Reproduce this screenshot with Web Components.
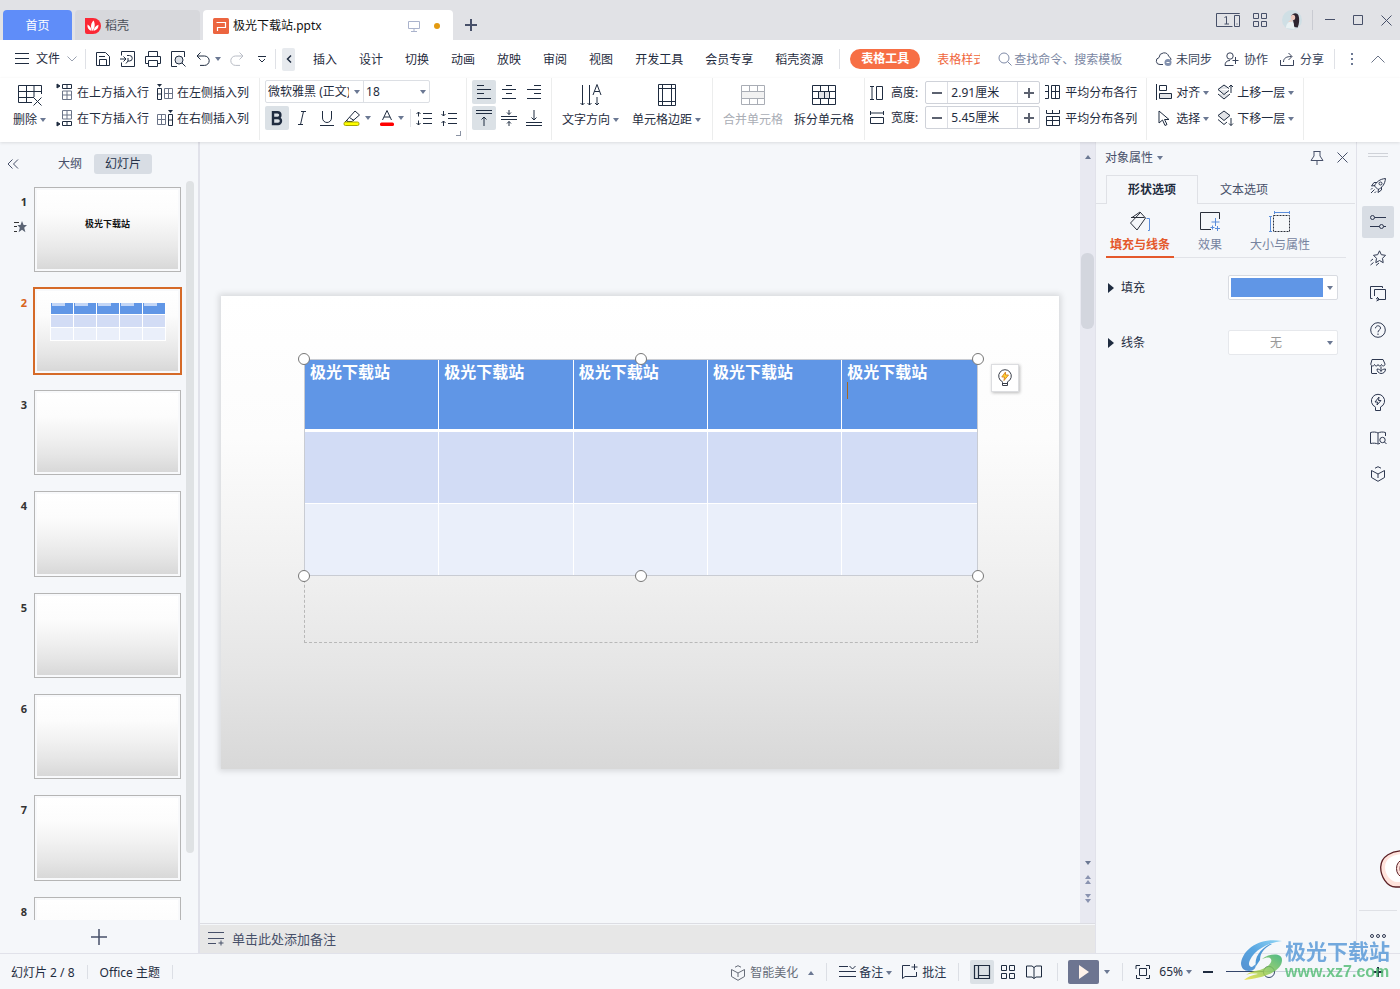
<!DOCTYPE html>
<html lang="zh-CN">
<head>
<meta charset="utf-8">
<title>极光下载站.pptx</title>
<style>
html,body{margin:0;height:100%}
body{font:12px/16px "Noto Sans","Noto Sans CJK SC",sans-serif;color:#1f2c40;background:#f5f7fa;overflow:hidden}
</style>
</head>
<body>
<office-app></office-app>
<script>
const RESET = `
*{box-sizing:border-box}
button,input,select{font:inherit;color:inherit;background:none;border:0;margin:0;padding:0;outline:0;border-radius:0}
button{display:flex;align-items:center;justify-content:center;white-space:nowrap;cursor:pointer}
select{appearance:none}
a{color:inherit;text-decoration:none}
h2,p{margin:0;font:inherit}`;

function define(name, css, html, setup) {
  const tpl = document.createElement('template');
  tpl.innerHTML = `<style>${RESET}${css}</style>${html}`;
  customElements.define(name, class extends HTMLElement {
    constructor() {
      super();
      this.attachShadow({mode: 'open'}).append(tpl.content.cloneNode(true));
    }
    connectedCallback() { if (setup) setup(this, this.shadowRoot); }
  });
}

/* name: [width, height, markup] */
const ICONS = {
  caret: [6,4,'<path d="M0 0h6L3 4z" fill="#6b7893" stroke="none"/>'],
  caretUp: [6,4,'<path d="M0 4h6L3 0z" fill="#6b7893" stroke="none"/>'],
  dblUp: [6,9,'<path d="M0 4h6L3 0zM0 9h6L3 5z" fill="#8a93b0" stroke="none"/>'],
  dblDown: [6,9,'<path d="M0 0h6L3 4zM0 5h6L3 9z" fill="#8a93b0" stroke="none"/>'],
  tri: [6,10,'<path d="M0 0l6 5-6 5z" fill="currentColor" stroke="none"/>'],
  chev: [10,6,'<path d="M.5.5L5 5l4.500-4.500"/>'],
  chevUp: [14,8,'<path d="M.5 7.500L7 1l6.500 6.500"/>'],
  chevL: [6,8,'<path d="M5 .5L1.500 4 5 7.500" stroke-width="1.500"/>'],
  dblL: [12,10,'<path d="M5.500.5L1 5l4.500 4.500M11 .5L6.500 5l4.500 4.500"/>'],
  plus: [14,14,'<path d="M7 1v12M1 7h12" stroke-width="2"/>'],
  plusBig: [16,16,'<path d="M8 0v16M0 8h16" stroke-width="1.500"/>'],
  plusS: [10,10,'<path d="M5 0v10M0 5h10" stroke-width="2"/>'],
  minusS: [10,10,'<path d="M0 5h10" stroke-width="2"/>'],
  menu: [14,12,'<path d="M0 .5h14M0 5.500h14M0 10.500h14"/>'],
  dots: [2,14,'<path d="M0 1h2v2H0zM0 6h2v2H0zM0 11h2v2H0z" fill="#6b7893" stroke="none"/>'],
  daoke: [16,16,'<path d="M0 0h8a8 8 0 010 16H2a2 2 0 01-2-2z" fill="#fb2835" stroke="none"/><path d="M7.500 13C5 9 6 5 8.500 2.500 10.500 6 10 10 7.500 13zM6.500 13C3.500 12 2 9.500 2.500 6.500 5 8 6.500 10 6.500 13zM8.500 13c.3-3 2-5 5-6.200.2 3.200-1.500 5.400-5 6.200z" fill="#fff" stroke="none"/>'],
  ppt: [16,16,'<rect width="16" height="16" rx="1.500" fill="#ec6540" stroke="none"/><path d="M3.500 4.500h9v5h-8v3.500" stroke="#fff" stroke-width="1.200"/>'],
  monitor: [12,12,'<path d="M.5 1.500h11v7H.5zM6 8.500v2.500M3 11.500h6"/>'],
  dot: [6,6,'<circle cx="3" cy="3" r="3" fill="#e39a10" stroke="none"/>'],
  winSwitch: [24,14,'<path d="M23.500 1V.5H.5v13h16M18.500 13.500v-11h5v11z"/><path d="M8.500 4.500l2-1v7.500M8.500 11h4.500M20.500 11h1"/>'],
  apps: [14,14,'<path d="M.5.5h5v5h-5zM8.500.5h5v5h-5zM.5 8.500h5v5h-5zM8.500 8.500h5v5h-5z"/>'],
  avatar: [20,20,'<circle cx="10" cy="10" r="10" fill="#cfdfe5" stroke="none"/><path d="M9 7c1-4 6-5 7.500-1.500 1 3 1 8-.8 12l-3.500-.5-1-6z" fill="#2d2530" stroke="none"/><ellipse cx="11" cy="7.500" rx="2.200" ry="2.800" fill="#ecc8bd" stroke="none"/><path d="M4 18c0-4 2.500-6.500 5.500-6.500 2 0 2.500 3 3 7.500z" fill="#e9f1f3" stroke="none"/><path d="M6 12l3-2.500 2 2" fill="#efcfc5" stroke="none"/>'],
  winMin: [10,10,'<path d="M0 4.500h10"/>'],
  winMax: [10,10,'<path d="M.5.5h9v9h-9z"/>'],
  close: [11,11,'<path d="M.5.5l10 10M10.500.5l-10 10"/>'],
  save: [16,16,'<path d="M1.500 1.500h9l4 4v9h-13zM4.500 14.500v-6h7v6M4 5.500h6"/>'],
  export: [16,16,'<path d="M1.500 4.500v-4h13v15h-13v-4M0 8h5.500M3.500 5.500L6 8l-2.500 2.500M7 4.500h2.500a2.500 2.500 0 010 5.500H8v-3M8 10l-2 2.500"/>'],
  print: [16,16,'<path d="M3.500 5.500v-5h9v5M3.500 12.500h-3v-7h15v7h-3M3.500 9.500h9v6h-9z"/>'],
  preview: [16,16,'<path d="M7 15.500H1.500V.5h13V6"/><circle cx="9" cy="9" r="4" fill="#dde1e7"/><path d="M12 12l3.500 3.500"/>'],
  undo: [14,14,'<path d="M4.500.5L1 4l3.500 3.500M1 4h7.500a4.700 4.700 0 010 9.400H4"/>'],
  redo: [14,14,'<path d="M9.500.5L13 4 9.500 7.500M13 4H5.500a4.700 4.700 0 000 9.400H10"/>'],
  more: [8,7,'<path d="M0 .5h8M1 3l3 3 3-3"/>'],
  search: [14,14,'<circle cx="6" cy="6" r="5"/><path d="M9.500 9.500L13.500 13.500"/>'],
  cloud: [16,14,'<path d="M7 12.500H4A3.500 3.500 0 013 5.600 5 5 0 0112.800 4.500 3.600 3.600 0 0115 8"/><circle cx="12" cy="10.500" r="3.500" fill="#8391ae" stroke="none"/><path d="M10.500 10.500h3" stroke="#fff"/>'],
  people: [15,14,'<circle cx="6" cy="4" r="3.200"/><path d="M9.500 13.500H1C1 10 3 8.500 6 8.500M11.500 5v7M8.500 8.500h6"/>'],
  share: [15,14,'<path d="M.5 8v5.500h13V8M3.500 10c0-4 3-5.500 8-5.500M8.500 1l3.500 3.500L8.500 8"/>'],
  del: [24,22,'<path d="M23.500 10V1.500h-23v17H14M.5 7.500h23M.5 13.500H16M8.500 1.500v17M16 1.500V13M15.500 13.500l8 8M23.500 13.500l-8 8"/>'],
  rowAbove: [16,16,'<path d="M0 0l3 2-3 2z" fill="currentColor"/><path d="M5.500.5h9v4h-9zM10 .5v4"/><path d="M5.500 7h9v8.500h-9zM10 7v8.500M5.500 11h9" stroke="#6b7488"/>'],
  rowBelow: [16,16,'<path d="M0 12l3 2-3 2z" fill="currentColor"/><path d="M5.500 11.500h9v4h-9zM10 11.500v4"/><path d="M5.500.5h9V9h-9zM10 .5V9M5.500 5h9" stroke="#6b7488"/>'],
  colLeft: [16,16,'<path d="M0 0h5L2.500 3z" fill="currentColor" stroke="none"/><path d="M.5 4.500h4v11h-4zM.5 10h4"/><path d="M7.500 4.500h8v10h-8zM11.500 4.500v10M7.500 9.500h8" stroke="#6b7488"/>'],
  colRight: [16,16,'<path d="M11 0h5l-2.500 3z" fill="currentColor" stroke="none"/><path d="M11.500 4.500h4v11h-4zM11.500 10h4"/><path d="M.5 4.500h8v10h-8zM4.500 4.500v10M.5 9.500h8" stroke="#6b7488"/>'],
  bold: [12,14,'<path d="M2 1.200h4.500a2.900 2.900 0 010 5.800H2zM2 7h5a3 3 0 010 6H2z" stroke-width="2.400"/>'],
  italic: [10,14,'<path d="M4 .5h5M1 13.500h5M6.500.5l-3 13"/>'],
  underline: [14,15,'<path d="M2.500 0v7a4.500 4.500 0 009 0V0M0 14.500h14"/>'],
  marker: [18,16,'<path d="M4 10l8-9 4.500 4L9 11.500H4zM6.500 7.500l4.500 3M4 10l-2 2"/><rect x="1" y="12" width="15" height="3.500" rx="1.500" fill="#ff0" stroke="#a8a400"/>'],
  fontColor: [14,16,'<path d="M2.500 10L7 .5 11.500 10M4 7h6"/><rect y="12.500" width="14" height="3.500" rx="1.500" fill="#f00" stroke="none"/>'],
  spaceOut: [16,15,'<path d="M7 2.500h9M7 7.500h9M7 12.500h9M2.500 1v4.500M.5 3l2-2 2 2M2.500 9.500V14M.5 12l2 2 2-2"/>'],
  spaceIn: [16,15,'<path d="M7 2.500h9M7 7.500h9M7 12.500h9M2.500 0v5M.5 3l2 2 2-2M2.500 15v-5M.5 12l2-2 2 2"/>'],
  alignL: [14,14,'<path d="M0 .5h7M0 4.500h14M0 8.500h7M0 13.500h14"/>'],
  alignC: [14,14,'<path d="M4 .5h6M0 4.500h14M4 8.500h6M0 13.500h14"/>'],
  alignR: [14,14,'<path d="M7 .5h7M0 4.500h14M7 8.500h7M0 13.500h14"/>'],
  vTop: [16,16,'<path d="M0 .5h16M0 3.500h16M8 16V7M5.500 9.500L8 7l2.500 2.500"/>'],
  vMid: [16,16,'<path d="M0 6.500h16M0 9.500h16M8 0v4.500M6 2.500l2 2 2-2M8 16v-4.500M6 13.500l2-2 2 2"/>'],
  vBot: [16,16,'<path d="M0 12.500h16M0 15.500h16M8 0v10M5.500 7.500L8 10l2.500-2.500"/>'],
  textDir: [22,22,'<path d="M2.500 1v20M.5 19l2 2 2-2M9.500 1v20M7.500 19l2 2 2-2M17 13v8M15 19l2 2 2-2M13 11L17 .5 21 11M14.500 7.500h5"/>'],
  cellMargin: [18,22,'<path d="M.5.5h17v21H.5zM4.500.5v21M13.500.5v21M.5 4.500h17M.5 17.500h17"/>'],
  merge: [24,20,'<path d="M.5.5h23v19H.5zM8.500.5v6M16.500.5v6M8.500 13.500v6M16.500 13.500v6"/><path d="M.5 6.500h23v7H.5z" fill="#f2f2f2"/>'],
  split: [24,20,'<path d="M.5.5h23v19H.5zM8.500.5v6M16.500.5v6M8.500 13.500v6M16.500 13.500v6"/><path d="M.5 6.500h23v7H.5z"/><path d="M6.500 6.500h11v7h-11zM12.500 6.500v7" fill="#e2e4e8"/>'],
  height: [14,14,'<path d="M0 .5h4M0 13.500h4M2 .5v13M6.500.5h6v13h-6z"/>'],
  width: [14,14,'<path d="M.5 0v4M13.500 0v4M.5 2h13M.5 6.500h13v6H.5z"/>'],
  distRow: [16,14,'<path d="M0 .5h3.500V13.500H0M0 6.500h3.500M6.500.5h8v13h-8zM6.500 6.500h8M10.500.5v13"/>'],
  distCol: [14,16,'<path d="M.5 0v3.500h13V0M6.500 0v3.500M.5 6.500h13v9H.5zM.5 10.500h13M6.500 6.500v9"/>'],
  align: [16,16,'<path d="M.5 0v16M3.500 1.500h7v5h-7z"/><path d="M3.500 9.500h12v5h-12z" fill="#e2e4e8"/>'],
  cursor: [14,16,'<path d="M2 1v12l3.500-3 2.500 5.500 2-1-2.500-5h4.500z"/>'],
  up: [16,16,'<path d="M1 10l6 5 6-5M1 5.500L7 1l5 3.500M1 5.500l6 5 5-4" fill="#e2e4e8"/><path d="M14 9V1M12 3l2-2 2 2"/>'],
  down: [16,16,'<path d="M1 5.500L7 1l6 4.500-6 5z" fill="#e2e4e8"/><path d="M1 9.500l6 5 3-2.500M14 8v7.500M12 13.500l2 2 2-2"/>'],
  star: [13,12,'<path d="M8 0l1.600 4H13l-2.800 2.800 1.200 4.400L8 8.800l-3.400 2.400 1.200-4.400L3.500 4h3z" fill="#5b6474" stroke="none"/><path d="M0 1.500h5M0 5.500h3M0 10.500h3"/>'],
  bulb: [14,18,'<path d="M4.500 13.500V12.800A6.300 6.300 0 119.500 12.800V16.500h-5zM4.500 14.500h5" stroke="#3a3f4a"/><path d="M7.500 3L3.800 8h2.700L6 11.500 10.500 6H7.500z" fill="#ffd52e" stroke="#dd8c2c"/>'],
  notes: [16,13,'<path d="M0 .5h16M0 6.500h16M0 11.500h8M13 8.500v5M10.500 11h5"/>'],
  pin: [14,14,'<path d="M3.500.5h7M4 .5V5L1 9.500h12L10 5V.5M7 9.500V14"/>'],
  bucket: [22,22,'<path d="M3 6.500l8-5.500 5.500 6-8.500 12L1.500 12 11 2M2 6.500h13.500"/><path d="M17.500 7.500h3v12h-1.500" stroke="#5a8ddb"/>'],
  effect: [22,20,'<path d="M12 18.500H1.500v-17h19V8"/><path d="M16.500 7v8M12.500 11h8M18.500 15v5M16 17.500h5M13.500 14.500v4M11.500 16.500h4" stroke="#5a8ddb"/>'],
  size: [22,22,'<path d="M4.500 4.500h16v16h-16z" stroke-dasharray="2 1"/><path d="M5 1.500h16M5.500 0v3M20.500 0v3M1.500 5v16M0 5.500h3M0 20.500h3" stroke="#5a8ddb"/>'],
  rocket: [16,16,'<path d="M4.500 8C6 4 10 1 15.500.5 15 6 12 10 8 11.500zM5 7.500L1.500 8 4 4.500h3M8.500 11l-.5 3.500 3.500-2.500V9M1 15l3.500-3.500M1 11.500l1.500-1.500M4.500 15L6 13.500"/><circle cx="10.500" cy="5.500" r="1.500"/>'],
  sliders: [16,14,'<circle cx="2.500" cy="2.500" r="2"/><circle cx="11.500" cy="11.500" r="2"/><path d="M4.500 2.500H16M0 11.500h9.500M13.500 11.500H16"/>'],
  starMove: [16,16,'<path d="M9.500.8l1.800 3.900 4.200.6-3 3 .7 4.400-3.700-2.200-3.700 2.200.7-4.400-3-3 4.200-.6zM.5 11l2.500-2M.5 15l3-2.500M6 15.500l3-2.500"/>'],
  screens: [16,16,'<path d="M2.500 12.500h-2V.5h12V2M9 13.500h6.500v-10h-11V10M6 12.500l3 1M6.500 15l3-1.500L7 11"/>'],
  help: [16,16,'<circle cx="8" cy="8" r="7.300"/><path d="M5.500 6.300C5.500 3 10.500 3 10.500 6c0 2-2.500 2-2.500 4.300M8 11.500V13"/>'],
  shop: [16,16,'<path d="M2 15.500h5M1.500 8v7.500M.8 6L2 1.500h11L15 6c0 2.500-3 2.500-3.500.5-.5 2-3 2-3.500 0-.5 2-3 2-3.500 0C4 8.500.8 8.500.8 6z"/><path d="M11 15.500c-2.500-.5-4-2-4-4.500 2 0 3.500 1 4 2.500.5-1.500 2-2.500 4.500-2.500 0 3-2 4.500-4.500 4.500zM11 13V8.500"/>'],
  bulbRail: [16,17,'<path d="M5.500 13.500V13A6.600 6.600 0 1110.500 13V16.500h-5zM9 3L5 8h2.500L7 11l4-4.500H8.500z"/>'],
  book: [17,14,'<path d="M8 2v10.500M8 2C6 .8 3 .8.5 1.500v11c2.500-.5 5.500-.5 7.500.5l2-.7M8 2c2-1.200 5-1.200 7.500-.5V5"/><circle cx="12.500" cy="9" r="2.700"/><path d="M14.500 11l2 2"/>'],
  cube: [16,16,'<path d="M5 2.200L8 .7l3 1.500M1.500 4.500v7L8 15.300l6.500-3.800v-7L8 8 1.500 4.500M8 8v4"/>'],
  more3: [16,6,'<circle cx="2" cy="3" r="1.500"/><circle cx="8" cy="3" r="1.500"/><circle cx="14" cy="3" r="1.500"/>'],
  notesList: [17,13,'<path d="M0 1.500h9M0 6.500h17M0 11.500h17M10.500 1l3 3 3-3"/>'],
  comment: [17,15,'<path d="M8 1.500H.5v13L3 12.500h11.500V8M12.500 0v6M9.500 3h6"/>'],
  viewNormal: [16,14,'<path d="M.5.5h15v13H.5zM4.500.5v13M4.500 10.500h11" stroke-width="1.200"/>'],
  read: [16,14,'<path d="M8 2v11.500M.5 1H6l2 1.500L10 1h5.500v11H10l-2 1.500L6 12H.5z"/>'],
  play: [10,14,'<path d="M0 0l10 7-10 7z" fill="#fff3ea" stroke="none"/>'],
  fit: [14,14,'<path d="M0 4V.5h4M10 .5h3.500V4M13.500 10v3.500H10M4 13.500H.500V10M3.500 3.500h7v7h-7z"/>'],
};

customElements.define('ui-icon', class extends HTMLElement {
  connectedCallback() {
    const [w, h, body] = ICONS[this.getAttribute('name')];
    if (!this.shadowRoot) this.attachShadow({mode: 'open'});
    this.shadowRoot.innerHTML = `<style>:host{display:block;flex:none}svg{display:block;overflow:visible}</style>
<svg width="${w}" height="${h}" viewBox="0 0 ${w} ${h}" fill="none" stroke="currentColor" aria-hidden="true">${body}</svg>`;
  }
});
const icon = n => `<ui-icon name="${n}"></ui-icon>`;

/* Button with an icon, a slotted label and an optional drop-down arrow.
   stack: large, label below the icon. */
define('tool-button', `
:host{display:block;flex:none}
button{height:24px;gap:4px}
.ic{width:16px;display:flex;justify-content:center}
.tx{display:flex;align-items:center;gap:3px;padding-top:2px}
:host([stack]) button{flex-direction:column;height:50px;gap:2px;justify-content:flex-start;padding-top:4px}
:host([stack]) .ic{height:22px;width:auto;align-items:center}
:host([stack]) .tx{height:22px}
:host([disabled]){color:#a9adb5}`,
`<button type="button"><span class="ic"></span><span class="tx"><slot></slot></span></button>`,
(el, root) => {
  root.querySelector('.ic').innerHTML = icon(el.getAttribute('icon'));
  if (el.hasAttribute('caret')) root.querySelector('.tx').insertAdjacentHTML('beforeend', icon('caret'));
  root.querySelector('button').disabled = el.hasAttribute('disabled');
});

/* Square icon-only button */
define('icon-button', `
:host{display:block;flex:none;--size:24px}
button{min-width:var(--size);height:24px;gap:4px}
:host([on]) button{background:#dbe1e6;border-radius:2px}`,
`<button type="button"></button>`,
(el, root) => {
  const b = root.querySelector('button');
  b.innerHTML = icon(el.getAttribute('icon')) + (el.hasAttribute('caret') ? icon('caret') : '');
  b.setAttribute('aria-label', el.getAttribute('label') || el.getAttribute('icon'));
});
const ib = (i, label, extra = '') => `<icon-button icon="${i}" label="${label}" ${extra}></icon-button>`;

define('title-bar', `
:host{display:flex;justify-content:space-between;height:40px;background:#e1e2e6;color:#475069}
nav{display:flex;align-items:flex-end;gap:3px;padding-left:3px}
.tab{display:flex;align-items:center;height:30px;border-radius:4px 4px 0 0;color:#4a4f58;background:#d7d8dc;padding:2px 10px 0;gap:4px}
.home{background:#5f8df9;color:#fff;width:69px;justify-content:center}
.docer{width:125px}
.doc{width:250px;background:#fff;color:#111;padding-right:13px}
.doc span{flex:1}
.doc ui-icon+ui-icon{margin-left:10px}
.mon{color:#aab3cc}
.add{width:30px;height:30px}
.win{display:flex;align-items:center}
.win button{width:28px;height:40px}
.win .wide{width:32px}
.sep{width:1px;height:20px;background:#c9cbd2;margin:0 3px 0 4px}`,
`<nav><a class="tab home" href="#home">首页</a><a class="tab docer" href="#docer">${icon('daoke')}<span>稻壳</span></a>
<a class="tab doc" href="#doc">${icon('ppt')}<span>极光下载站.pptx</span><ui-icon class="mon" name="monitor"></ui-icon>${icon('dot')}</a>
<button class="add" aria-label="新建">${icon('plus')}</button></nav>
<div class="win"><button class="wide" aria-label="窗口">${icon('winSwitch')}</button><button class="wide" aria-label="应用">${icon('apps')}</button><button class="wide" aria-label="账号">${icon('avatar')}</button><span class="sep"></span>
<button aria-label="最小化">${icon('winMin')}</button><button aria-label="最大化">${icon('winMax')}</button><button aria-label="关闭">${icon('close')}</button></div>`);

define('menu-bar', `
:host{display:flex;align-items:center;height:38px;background:#fff;padding:0 15px}
.file{gap:7px;padding-right:8px}
.file ui-icon:last-child{color:#9aa1b0}
.sep{flex:none;width:1px;height:20px;background:#dfe1e6}
.quick{display:flex;align-items:center;margin:0 1px 0 4px}
.quick icon-button{--size:25px}
.quick .off{color:#b9bdc6}
.quick .off,.z{margin-left:3px}
.back{flex:none;width:13px;height:23px;background:#e7eaee;margin:0 18px 0 6px;border-radius:2px}
nav{display:flex;align-items:center;gap:22px;white-space:nowrap;margin-right:16px;padding-top:2px}
.pill{margin:0 17px 0 10px;height:20px;padding:0 11px;border-radius:10px;background:#f76f45;color:#fff;font-weight:bold;line-height:20px;white-space:nowrap}
.clip{width:43px;overflow:hidden;white-space:nowrap;color:#f0663c;margin-right:18px;padding-top:2px}
label{display:flex;align-items:center;gap:2px;color:#7f8ba8}
input{width:124px;height:20px}
input::placeholder{color:#7b87a3;opacity:1}
.right{margin-left:auto;display:flex;align-items:center;gap:12px}
.right>ui-icon{color:#6b7488}
.right>ui-icon:last-child{margin-left:6px}
.right .sep{margin:0 4px 0 -2px}
.right tool-button{color:#39435a}`,
`<button class="file">${icon('menu')}<span>文件</span>${icon('chev')}</button><span class="sep"></span>
<div class="quick">${ib('save','保存')}${ib('export','输出')}${ib('print','打印')}${ib('preview','打印预览')}${ib('undo','撤销')}
${icon('caret')}${ib('redo','恢复','class="off"')}${ib('more','更多')}</div><span class="sep"></span>
<button class="back" aria-label="向左">${icon('chevL')}</button>
<nav>${['插入','设计','切换','动画','放映','审阅','视图','开发工具','会员专享','稻壳资源'].map(t => `<a href="#">${t}</a>`).join('')}</nav>
<span class="sep"></span><a class="pill" href="#">表格工具</a><a class="clip" href="#">表格样式</a>
<label>${icon('search')}<input type="search" aria-label="搜索" placeholder="查找命令、搜索模板"></label>
<div class="right"><tool-button icon="cloud">未同步</tool-button><tool-button icon="people">协作</tool-button><tool-button icon="share">分享</tool-button><span class="sep"></span>${icon('dots')}${icon('chevUp')}</div>`);

define('size-stepper', `
:host{display:flex;width:115px;height:23px;border:1px solid #cfd2d9;border-radius:2px;background:#fff;color:#5c6270}
button{flex:none;width:21px}
input{flex:1;min-width:0;border:solid #dcdee4;border-width:0 1px;padding-left:3px;color:#1f2c40}`,
`<button aria-label="减小">${icon('minusS')}</button><input type="text"><button aria-label="增大">${icon('plusS')}</button>`,
(el, root) => {
  const i = root.querySelector('input');
  i.value = el.getAttribute('value');
  i.setAttribute('aria-label', el.getAttribute('label'));
});

define('ribbon-group', `
:host{position:relative;display:flex;flex:none;padding:2px var(--pr,9px) 0 var(--pl,9px);border-right:1px solid #eceded;height:62px}`,
`<slot></slot>`);

define('ribbon-bar', `
:host{display:flex;height:64px;background:#fff;padding-left:4px;box-shadow:0 1px 3px #0000001c;z-index:1;position:relative}
.cols{display:grid;grid-template-rows:24px 24px;row-gap:2px;column-gap:8px;grid-auto-flow:column;align-content:start}
.large{grid-template-rows:auto}
.first{--pr:10px}
.wide{--pl:10px;--pr:11px}.mid{--pl:10px;--pr:10px}.tight{--pl:5px;--pr:5px}.dim{--pl:5px}
.g1{gap:11px}.g4{gap:13px}
.font{width:196px;display:flex;flex-direction:column;gap:3px}
.pick{display:flex;width:165px;height:23px;border:1px solid #dcdfe4;border-radius:2px}
.box{position:relative;display:flex;width:97px}
.box+.box{width:67px;border-left:1px solid #dcdfe4}
.box ui-icon{position:absolute;right:3px;top:9px}
select{flex:1;min-width:0;padding:0 14px 0 2px;overflow:hidden}
.fmt{display:flex;align-items:center;gap:1px}
.fmt .pair{display:flex;width:34px;justify-content:center}
.sep{width:1px;height:18px;background:#e2e4e8}
.corner{position:absolute;right:5px;bottom:4px;width:5px;height:5px;border:solid #8a92a3;border-width:0 1px 1px 0}
.al{column-gap:1px}
.dims{display:grid;grid-template-columns:14px auto 115px;grid-template-rows:23px 23px;gap:2px 7px;align-items:center;padding-top:1px;align-content:start;margin-right:5px}
`,
`<ribbon-group class="first"><div class="cols g1 large"><tool-button stack caret icon="del">删除</tool-button><div class="cols">
<tool-button icon="rowAbove">在上方插入行</tool-button><tool-button icon="rowBelow">在下方插入行</tool-button>
<tool-button icon="colLeft">在左侧插入列</tool-button><tool-button icon="colRight">在右侧插入列</tool-button></div></div></ribbon-group>
<ribbon-group class="tight"><div class="font"><div class="pick">
<span class="box"><select aria-label="字体"><option>微软雅黑 (正文)</option></select>${icon('caret')}</span>
<span class="box"><select aria-label="字号"><option>18</option></select>${icon('caret')}</span></div>
<div class="fmt">${ib('bold','加粗','on')}${ib('italic','倾斜')}${ib('underline','下划线')}<span class="pair">${ib('marker','突出显示','caret')}</span><span class="pair">${ib('fontColor','字体颜色','caret')}</span><span class="sep"></span>${ib('spaceOut','增大行距')}${ib('spaceIn','减小行距')}</div></div>
<span class="corner"></span></ribbon-group>
<ribbon-group class="tight"><div class="cols al">${ib('alignL','左对齐','on')}${ib('vTop','顶端对齐','on')}${ib('alignC','居中')}${ib('vMid','垂直居中')}${ib('alignR','右对齐')}${ib('vBot','底端对齐')}</div></ribbon-group>
<ribbon-group class="wide"><div class="cols g4 large"><tool-button stack caret icon="textDir">文字方向</tool-button><tool-button stack caret icon="cellMargin">单元格边距</tool-button></div></ribbon-group>
<ribbon-group class="mid"><div class="cols g1 large"><tool-button stack disabled icon="merge">合并单元格</tool-button><tool-button stack icon="split">拆分单元格</tool-button></div></ribbon-group>
<ribbon-group class="dim"><div class="dims">${icon('height')}<span>高度:</span><size-stepper label="高度" value="2.91厘米"></size-stepper>${icon('width')}<span>宽度:</span><size-stepper label="宽度" value="5.45厘米"></size-stepper></div>
<div class="cols"><tool-button icon="distRow">平均分布各行</tool-button><tool-button icon="distCol">平均分布各列</tool-button></div></ribbon-group>
<ribbon-group><div class="cols"><tool-button caret icon="align">对齐</tool-button><tool-button caret icon="cursor">选择</tool-button><tool-button caret icon="up">上移一层</tool-button><tool-button caret icon="down">下移一层</tool-button></div></ribbon-group>`);

const SLIDE_BG = 'linear-gradient(#fff,#fcfcfc 30%,#f1f1f1 56%,#e6e6e6 78%,#d8d8d8)';

define('slide-thumb', `
:host{display:grid;grid-template-columns:13px 147px;gap:7px;color:#333}
.no{display:flex;flex-direction:column;align-items:flex-end;gap:11px;padding-top:7px;font-weight:bold;font-size:11px}
.pg{aspect-ratio:148/86;border:1px solid #b5b5b5;padding:2px;background:#f8f9fb}
.in{height:100%;background:${SLIDE_BG};position:relative;display:flex;justify-content:center}
:host([on]) .no{color:#d8641c}
:host([on]) .pg{border-color:#d56a28;box-shadow:0 0 0 1px #d56a28}`,
`<div class="no"><span class="n"></span></div><div class="pg"><div class="in"><slot></slot></div></div>`,
(el, root) => {
  root.querySelector('.n').textContent = el.getAttribute('no');
  if (el.hasAttribute('anim')) root.querySelector('.no').insertAdjacentHTML('beforeend', icon('star'));
});

define('mini-table', `
:host{display:grid;grid-template-columns:repeat(5,1fr);grid-template-rows:repeat(3,1fr);gap:1px;background:#fff;padding:0 1px 1px}
i{background:#eaeffa}
i:nth-of-type(-n+10){background:#d2dcf5}
i:nth-of-type(-n+5){background:linear-gradient(90deg,transparent 1px,#c3d6f6 1px 14px,transparent 14px) top/100% 3px no-repeat #6096e6}`,
'<i></i>'.repeat(15));

define('slide-panel', `
:host{display:flex;flex-direction:column;width:200px;border-right:2px solid #e1e2ea;background:#f5f7fa;min-height:0}
header{display:flex;align-items:center;height:39px;padding:4px 0 0 7px;color:#475069}
.tabs{display:flex;gap:1px;margin-left:28px}
.tabs button{height:20px;padding:0 11px;border-radius:3px}
.tabs .on{background:#d8dde4;color:#26324a}
.body{flex:1;display:flex;min-height:0}
.list{flex:1;display:flex;flex-direction:column;gap:16px;padding:6px 0 0 14px;overflow:hidden}
h2{margin-top:25px;font:bold 9px/18px "Noto Sans CJK SC",sans-serif;color:#111}
mini-table{position:absolute;left:9.5%;top:14%;width:82%;height:48%}
.bar{width:8px;height:91%;border-radius:4px;background:#dfe2e4;margin-right:4px}
footer{height:33px;display:flex;justify-content:center;align-items:center;color:#475069}`,
`<header><button aria-label="收起">${icon('dblL')}</button><div class="tabs"><button>大纲</button><button class="on">幻灯片</button></div></header>
<div class="body"><div class="list"><slide-thumb no="1" anim><h2>极光下载站</h2></slide-thumb><slide-thumb no="2" on><mini-table></mini-table></slide-thumb>
${[3,4,5,6,7,8].map(n => `<slide-thumb no="${n}"></slide-thumb>`).join('')}</div><div class="bar"></div></div>
<footer><button aria-label="新建幻灯片">${icon('plusBig')}</button></footer>`);

define('slide-canvas', `
:host{display:grid;grid-template:1fr 30px/1fr 15px;min-width:0;min-height:0;border-right:1px solid #e1e2ea}
.stage{display:flex;align-items:center;justify-content:center;padding:0 21px;min-width:0}
.slide{position:relative;width:100%;aspect-ratio:838/473;background:${SLIDE_BG};box-shadow:0 0 6px 2px #00000020}
.frame{position:absolute;left:9.9%;top:13.3%;width:80.4%;height:60%;border:1px dashed #b8b8b8}
.obj{position:absolute;left:9.9%;top:13.3%;width:80.4%;height:46%}
table{width:100%;height:100%;border-collapse:separate;border-spacing:0;table-layout:fixed;border:1px solid #c9ccd3}
th,td{padding:0;border-right:1px solid #fff;height:33%;vertical-align:top}
th:last-child,td:last-child{border-right:0}
th{background:#6096e6;border-bottom:3px solid #fff;text-align:left;padding:1px 5px;color:#fff;font:bold 16px/20px "Noto Sans CJK SC",sans-serif;white-space:nowrap}
tr:nth-child(2) td{background:#d2dcf5;border-bottom:1px solid #fff}
tr:nth-child(3) td{background:#eaeffa}
.caret{display:block;width:1px;height:17px;background:#a8691f;margin-top:1px}
.h{position:absolute;width:12px;height:12px;margin:-6px;border:1px solid #777;border-radius:50%;background:#fff}
.idea{position:absolute;left:100%;top:5px;margin-left:13px;width:28px;height:28px;background:#fff;border:1px solid #dcdde0;box-shadow:1px 1px 3px #0004}
.scroll{display:flex;flex-direction:column;align-items:center;gap:10px;background:#e8e9f1;padding:13px 0 20px}
.track{flex:1;display:flex;flex-direction:column;align-self:stretch;padding:0 1px}
.track i{flex:75}.track i:first-child{flex:12}.track b{flex:11;background:#d3d6de;border-radius:6px}
.notes{grid-column:1/3;display:flex;align-items:center;gap:8px;padding-left:8px;background:#e7e7e7;border-top:1px solid #dcdde3;box-shadow:inset 0 1px #f5f7fa;color:#475069;font-size:13px}
.notes input{flex:1}.notes input::placeholder{color:#475069;opacity:1}`,
`<div class="stage"><div class="slide"><div class="frame"></div><div class="obj"><table>
<tr>${'<th>极光下载站</th>'.repeat(4)}<th>极光下载站<span class="caret"></span></th></tr><tr>${'<td></td>'.repeat(5)}</tr><tr>${'<td></td>'.repeat(5)}</tr></table>
${[[0,0],[50,0],[100,0],[0,100],[50,100],[100,100]].map(([x, y]) => `<span class="h" style="left:${x}%;top:${y}%"></span>`).join('')}
<button class="idea" aria-label="智能推荐">${icon('bulb')}</button></div></div></div>
<div class="scroll">${icon('caretUp')}<div class="track"><i></i><b></b><i></i></div>${icon('caret')}${icon('dblUp')}${icon('dblDown')}</div>
<label class="notes">${icon('notes')}<input type="text" placeholder="单击此处添加备注" aria-label="备注"></label>`);

define('property-panel', `
:host{display:block;width:261px;border-right:1px solid #e1e2ea;background:#f5f7fa}
header{display:flex;align-items:center;height:33px;padding:0 8px 2px 9px;color:#475069}
header button{gap:4px}
header .t{margin-right:auto}
header button+button+button{margin-left:13px}
.tabs{display:flex;border-bottom:1px solid #dfe1e6;height:29px;padding-left:10px;margin-right:1px}
.tabs button{width:92px;height:29px;color:#475069}
.tabs .on{border:1px solid #dfe1e6;border-bottom:0;background:#f5f7fa;font-weight:bold;color:#1f2c40}
.sub{display:flex;gap:2px;margin:0 10px;border-bottom:1px solid #e1e3e8;height:54px}
.sub button{flex-direction:column;gap:4px;width:68px;height:54px;padding-top:3px;color:#76839f;border-bottom:2px solid transparent}
.sub ui-icon{color:#2a2f3a;height:22px}
.sub .on{color:#e4582b;border-color:#e4582b;font-weight:bold}
.row{display:flex;align-items:center;height:55px;padding:0 18px 0 12px;gap:7px}
.sub+.row{margin-top:2px}
.row span{margin-right:auto}
.box{position:relative;display:flex;width:110px;height:25px;border:1px solid #d8dbe1;border-radius:2px;background:#fff;padding:2px 14px 2px 2px}
.box select{flex:1;padding-left:39px;color:#999}
.box>ui-icon{position:absolute;right:4px;top:10px}
.fill select{background:#6096e6}
.none{border-color:#e6e8ec}`,
`<header><button class="t">对象属性 ${icon('caret')}</button><button aria-label="固定">${icon('pin')}</button><button aria-label="关闭">${icon('close')}</button></header>
<div class="tabs"><button class="on">形状选项</button><button>文本选项</button></div>
<div class="sub"><button class="on">${icon('bucket')}填充与线条</button><button>${icon('effect')}效果</button><button>${icon('size')}大小与属性</button></div>
<div class="row">${icon('tri')}<span>填充</span><div class="box fill"><select aria-label="填充"><option></option></select>${icon('caret')}</div></div>
<div class="row">${icon('tri')}<span>线条</span><div class="box none"><select aria-label="线条"><option>无</option></select>${icon('caret')}</div></div>`);

define('tool-rail', `
:host{position:relative;display:flex;flex-direction:column;align-items:center;gap:4px;width:43px;background:#f5f7fa;padding:11px 1px 0 0;color:#2e3850}
hr{width:20px;height:4px;border:solid #cfd2d8;border-width:1px 0;margin:0 0 9px}
button{width:32px;height:32px;border-radius:2px}
.on{background:#d8dde4}
footer{margin-top:auto;width:38px;border-top:1px solid #dfe1e6;height:43px;display:flex;justify-content:center;padding-top:22px}
.pet{position:absolute;right:0;bottom:65px}
.pet svg{display:block}`,
`<hr>${['rocket','sliders','starMove','screens','help','shop','bulbRail','book','cube'].map(n => `<button aria-label="${n}" ${n === 'sliders' ? 'class="on"' : ''}>${icon(n)}</button>`).join('')}
<footer>${icon('more3')}</footer>
<div class="pet"><svg width="20" height="38" viewBox="0 0 20 38" fill="none" stroke="#5b1f24"><path d="M24 .7C12 .7 1 6 .7 17c-.2 9 6 20 15 20H24" fill="#ffe3dc" stroke-width="1.300"/><path d="M24 4C14 4 5 8 5 17c0 8 6 15 12 15h7z" fill="#fff" stroke="none"/><ellipse cx="23" cy="18.500" rx="6.500" ry="8.500" fill="#fde0da"/><ellipse cx="24" cy="18.500" rx="4" ry="6" fill="#f7c8c0"/></svg></div>`);

define('status-bar', `
:host{display:flex;align-items:center;height:36px;border-top:1px solid #e1e2ea;background:#f5f7fa;padding:0 11px;gap:10px}
.sep{flex:none;width:1px;height:14px;background:#dcdfe5}
.l{display:flex;align-items:center;gap:12px;white-space:nowrap}
.l span{padding-top:2px}
.r{display:flex;align-items:center;margin-left:auto}
.r .sep{height:18px}
.smart{color:#666c78;gap:4px;padding-top:2px}
.smart ui-icon:last-child{margin-left:6px}
.n{gap:10px;margin:0 12px}
.n tool-button{color:#26324a}
.v{display:flex;gap:2px;margin:0 11px;align-items:center}
.play{width:31px;height:24px;background:#6d7591;border-radius:2px;margin:0 5px 0 10px}
.z{display:flex;align-items:center;margin-left:13px;gap:9px}
.pct{gap:3px}
.ms{margin:0 4px 0 2px}
.z input{margin:0;appearance:none;width:138px;height:14px;background:linear-gradient(90deg,#34466a 27%,#c9d0da 27%) center/100% 1px no-repeat}
.z input::-webkit-slider-thumb{appearance:none;width:12px;height:12px;border:1px solid #34466a;border-radius:50%;background:transparent}
.ps{margin-right:6px}`,
`<div class="l"><span>幻灯片 2 / 8</span><i class="sep"></i><span>Office 主题</span><i class="sep"></i></div>
<div class="r"><button class="smart">${icon('cube')}智能美化 ${icon('caretUp')}</button>
<i class="sep" style="margin-left:12px"></i><div class="l n"><tool-button icon="notesList" caret>备注</tool-button><tool-button icon="comment">批注</tool-button></div><i class="sep"></i>
<div class="v">${ib('viewNormal','普通视图','on')}${ib('apps','浏览视图')}${ib('read','阅读视图')}</div><i class="sep"></i>
<button class="play" aria-label="放映">${icon('play')}</button>${icon('caret')}<i class="sep" style="margin-left:12px"></i>
<div class="z">${icon('fit')}<button class="pct">65% ${icon('caret')}</button><button class="ms" aria-label="缩小">${icon('minusS')}</button><input type="range" aria-label="缩放" min="0" max="100" value="29"><button class="ps" aria-label="放大">${icon('plusS')}</button></div></div>`);

define('site-mark', `
:host{position:fixed;right:10px;bottom:7px;display:flex;align-items:center;gap:1px;pointer-events:none;z-index:3;opacity:.85}
svg{display:block}
p{font:bold 21px/24px "Noto Sans CJK SC",sans-serif;color:#5b9bd8}
p+p{font:bold 16px/20px "Liberation Sans",sans-serif;color:#58be78}`,
`<svg width="44" height="42" viewBox="0 0 44 42"><defs><linearGradient id="b" x1="1" y1="0" x2="0" y2="1"><stop stop-color="#7fd0f4"/><stop offset=".5" stop-color="#3d98dd"/><stop offset="1" stop-color="#3a7fc8"/></linearGradient><linearGradient id="g" x1="0" y1="1" x2="1" y2="0"><stop stop-color="#f1e23c"/><stop offset=".5" stop-color="#8bc95a"/><stop offset="1" stop-color="#31ae72"/></linearGradient></defs>
<path d="M42 2C20-2 3 10 1 24c0 5 3 8 8 8 5 0 7-3 7-7l-4 3c-3 0-4-3-2-7C14 12 26 4 42 2z" fill="url(#b)"/><path d="M30 5C20 10 14 19 16 27l4-6C20 14 24 9 32 5z" fill="#2f86cf"/><path d="M22 20c8-6 20-6 20 1 0 11-17 18-38 20 3-3 8-5 14-6-4-1-10 0-12 1 5-4 9-4 14-5 9-3 14-9 10-12-2-1-5 0-8 1z" fill="url(#g)"/></svg>
<div><p>极光下载站</p><p>www.xz7.com</p></div>`);

define('office-app', `
:host{display:grid;grid-template-rows:auto auto auto minmax(0,1fr) auto;height:100vh;overflow:hidden}
main{display:grid;grid-template-columns:auto minmax(0,1fr) auto auto;min-height:0}`,
`<title-bar></title-bar><menu-bar></menu-bar><ribbon-bar></ribbon-bar>
<main><slide-panel></slide-panel><slide-canvas></slide-canvas><property-panel></property-panel><tool-rail></tool-rail></main>
<status-bar></status-bar><site-mark></site-mark>`);
</script>
</body>
</html>
